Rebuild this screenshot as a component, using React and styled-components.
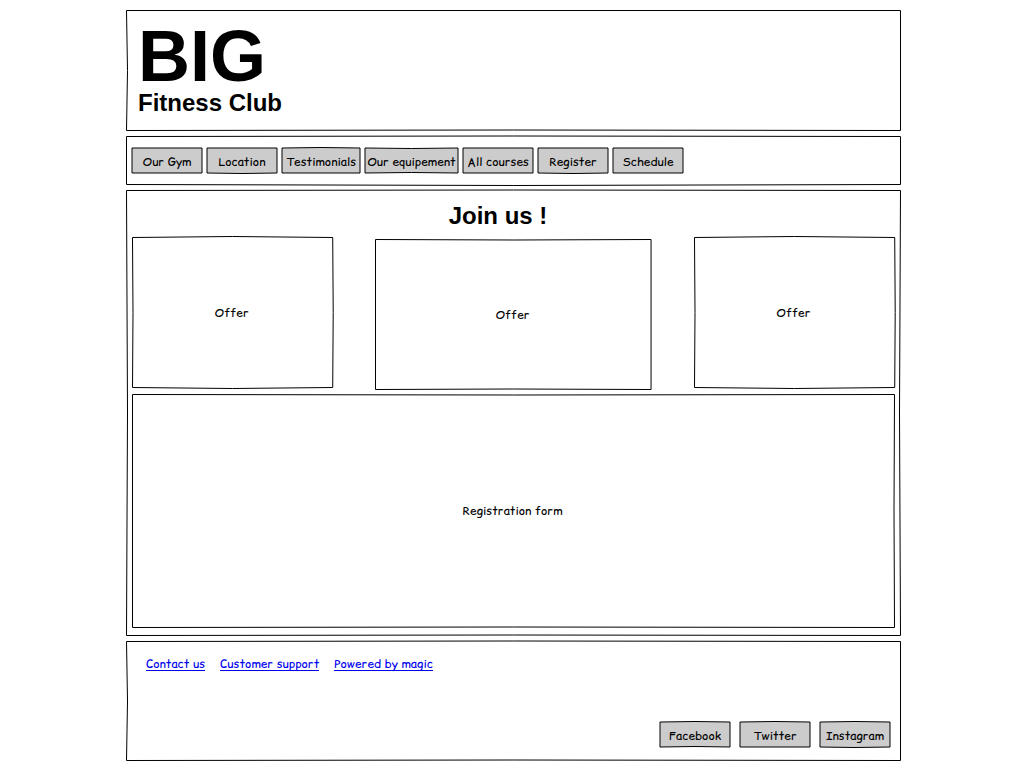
import React from "react";
import styled, { createGlobalStyle } from "styled-components";

const GlobalStyle = createGlobalStyle`
  *, *::before, *::after { box-sizing: border-box; }
  body { margin: 0; background: #fff; color: #000; }
`;

const hand = `"Comic Sans MS", "Comic Relief", "Comic Neue", "Noto Sans", sans-serif`;
const plain = `"Liberation Sans", Arial, sans-serif`;

const Page = styled.div`
  display: grid;
  grid-template-columns: 126fr minmax(0, 775fr) 123fr;
  row-gap: 5px;
  padding: 10px 0 7px;
  font-family: ${hand};
  font-size: 12px;
  font-variant-ligatures: none;
  line-height: 16px;

  > * {
    grid-column: 2;
  }
`;

const Outline = styled.svg`
  position: absolute;
  inset: 0;
  width: 100%;
  height: 100%;
  overflow: visible;
  pointer-events: none;
  z-index: -1;

  path {
    fill: ${({ $fill }) => $fill || "none"};
    stroke: #000;
    stroke-width: 1px;
    vector-effect: non-scaling-stroke;
  }
`;

/* Hand-drawn frame: each side bends by the given amount, [top, right, bottom, left]. */
function Sketch({ w, h, bow, fill, inset = 0.5 }) {
  const [t, r, b, l] = bow;
  const x2 = w - inset;
  const y2 = h - inset;
  const d = [
    `M${inset} ${inset}`,
    `Q${w / 2} ${inset + t * 2} ${x2} ${inset}`,
    `Q${x2 + r * 2} ${h / 2} ${x2} ${y2}`,
    `Q${w / 2} ${y2 + b * 2} ${inset} ${y2}`,
    `Q${inset + l * 2} ${h / 2} ${inset} ${inset}Z`,
  ].join(" ");
  return (
    <Outline viewBox={`0 0 ${w} ${h}`} preserveAspectRatio="none" $fill={fill} aria-hidden="true">
      <path d={d} />
    </Outline>
  );
}

const Header = styled.header`
  position: relative;
  z-index: 0;
  min-height: 121px;
  padding: 11px 12px;
  font-family: ${plain};
  font-weight: 700;
`;

const Brand = styled.h1`
  margin: 0;
  font-size: 72px;
  line-height: 70px;
`;

const Tagline = styled.p`
  margin: 0;
  font-size: 24px;
  line-height: 24px;
`;

const Nav = styled.nav`
  position: relative;
  z-index: 0;
  display: flex;
  flex-wrap: wrap;
  gap: 5px;
  min-height: 49px;
  padding: 12px 6px;
`;

const SketchButton = styled.button`
  position: relative;
  z-index: 0;
  display: flex;
  align-items: center;
  justify-content: center;
  width: ${({ $width }) => $width}px;
  height: 25px;
  padding: 2px 0 0;
  border: 0;
  background: none;
  color: #000;
  font: inherit;
  font-variant-ligatures: none;
  white-space: nowrap;
  cursor: pointer;
`;

const Main = styled.main`
  position: relative;
  z-index: 0;
  min-height: 446px;
  padding: 12px 6px 7px;
`;

const Heading = styled.h2`
  margin: 0 0 7px;
  padding-right: 31px;
  font-family: ${plain};
  font-size: 24px;
  font-weight: 700;
  line-height: 28px;
  text-align: center;
`;

const Offers = styled.div`
  display: flex;
  gap: 42px;
  align-items: flex-start;
`;

const Box = styled.section`
  position: relative;
  z-index: 0;
  display: flex;
  align-items: center;
  justify-content: center;
  padding-right: 2px;
`;

const Offer = styled(Box)`
  flex: ${({ $grow }) => $grow} 1 0;
  height: 151px;
  margin-top: ${({ $featured }) => ($featured ? 2 : 0)}px;
`;

const Registration = styled(Box)`
  height: 234px;
  margin-top: 4px;
`;

const Footer = styled.footer`
  position: relative;
  z-index: 0;
  display: flex;
  flex-direction: column;
  justify-content: space-between;
  min-height: 120px;
  padding: 15px 11px 14px 20px;
`;

const Links = styled.div`
  display: flex;
  flex-wrap: wrap;
  gap: 15px;
`;

const TextLink = styled.a`
  height: 15px;
  border-bottom: 1px solid #00e;
  color: #00e;
  text-decoration: none;
`;

const Social = styled.div`
  display: flex;
  justify-content: flex-end;
  gap: 10px;
`;

function PanelButton({ label, width = 70, bow = [0, 0, 0, 0] }) {
  return (
    <SketchButton type="button" $width={width}>
      <Sketch w={width} h={25} bow={bow} fill="#ccc" inset={0} />
      {label}
    </SketchButton>
  );
}

const navItems = [
  { label: "Our Gym" },
  { label: "Location", bow: [0, 0, 0.5, 0] },
  { label: "Testimonials", width: 78, bow: [-0.5, 0, 0, 0] },
  { label: "Our equipement", width: 93, bow: [0.5, 0, -0.5, 0] },
  { label: "All courses" },
  { label: "Register", bow: [0, 0, 0.5, 0] },
  { label: "Schedule" },
];

const offers = [
  { id: "left", w: 201, bow: [-1, 0.5, 1, 0.5] },
  { id: "middle", w: 277, featured: true, bow: [0.5, 0, -0.5, 0] },
  { id: "right", w: 201, bow: [-1, 0.5, 1, 0.5] },
];

const socialItems = [
  { label: "Facebook", bow: [-0.5, 0, -0.5, 0] },
  { label: "Twitter", bow: [-0.5, 0, 0, 0] },
  { label: "Instagram", bow: [-0.5, 0, 0.5, 0] },
];

export default function App() {
  return (
    <>
      <GlobalStyle />
      <Page>
        <Header>
          <Sketch w={775} h={121} bow={[0, 0, -0.5, 1]} />
          <Brand>BIG</Brand>
          <Tagline>Fitness Club</Tagline>
        </Header>
        <Nav>
          <Sketch w={775} h={49} bow={[-0.5, 0, 1, 0]} />
          {navItems.map((item) => (
            <PanelButton key={item.label} {...item} />
          ))}
        </Nav>
        <Main>
          <Sketch w={775} h={446} bow={[-0.5, -1, -0.5, 1]} />
          <Heading>Join us !</Heading>
          <Offers>
            {offers.map(({ id, w, bow, featured }) => (
              <Offer key={id} $grow={w} $featured={featured}>
                <Sketch w={w} h={151} bow={bow} />
                Offer
              </Offer>
            ))}
          </Offers>
          <Registration>
            <Sketch w={763} h={234} bow={[0.5, -0.5, -0.5, 0]} />
            Registration form
          </Registration>
        </Main>
        <Footer>
          <Sketch w={775} h={120} bow={[-0.5, 0, -0.5, 1]} />
          <Links>
            <TextLink href="#contact">Contact us</TextLink>
            <TextLink href="#support">Customer support</TextLink>
            <TextLink href="#magic">Powered by magic</TextLink>
          </Links>
          <Social>
            {socialItems.map((item) => (
              <PanelButton key={item.label} {...item} />
            ))}
          </Social>
        </Footer>
      </Page>
    </>
  );
}
